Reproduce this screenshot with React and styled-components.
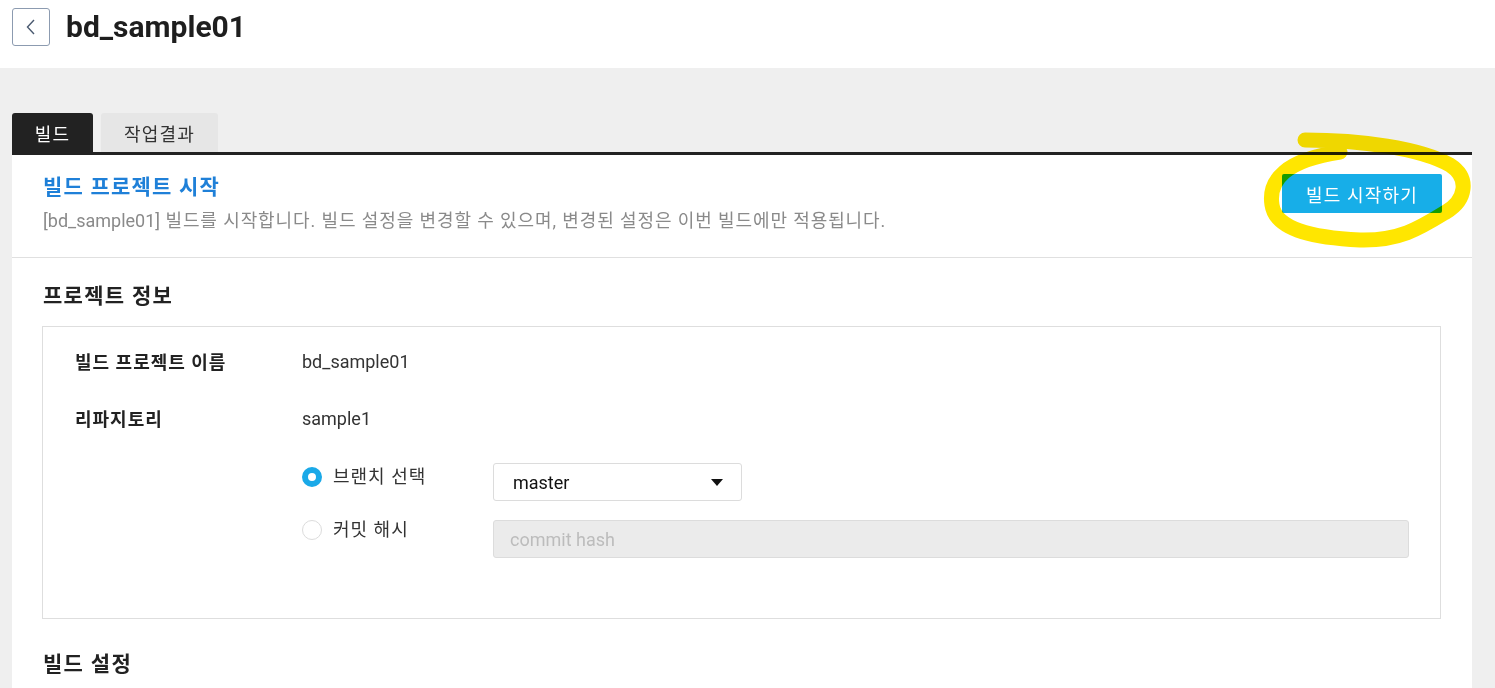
import React, { useState } from 'react';
import styled, { createGlobalStyle } from 'styled-components';

const GlobalStyle = createGlobalStyle`
  html, body {
    margin: 0;
    padding: 0;
    background: #efefef;
  }
  body {
    font-family: Roboto, "Noto Sans CJK KR", "Noto Sans", sans-serif;
    color: #222;
  }
  * {
    box-sizing: border-box;
  }
`;

function App() {
  const [mode, setMode] = useState('branch');
  const [tab, setTab] = useState('build');

  return (
    <Page>
      <GlobalStyle />
      <Header>
        <BackButton aria-label="back">
          <svg width="14" height="20" viewBox="0 0 14 20">
            <path d="M10 3 L3.5 10 L10 17" fill="none" stroke="#4a5a70" strokeWidth="1.4" />
          </svg>
        </BackButton>
        <PageTitle>bd_sample01</PageTitle>
      </Header>

      <Main>
        <Tabs>
          <Tab $active={tab === 'build'} $width={81} onClick={() => setTab('build')}>
            빌드
          </Tab>
          <Tab $active={tab === 'result'} $width={117} onClick={() => setTab('result')}>
            작업결과
          </Tab>
        </Tabs>

        <Panel>
          <PanelHead>
            <div>
              <PanelTitle>빌드 프로젝트 시작</PanelTitle>
              <PanelDesc>
                <Latin>[bd_sample01]</Latin> 빌드를 시작합니다. 빌드 설정을 변경할 수 있으며, 변경된 설정은 이번 빌드에만 적용됩니다.
              </PanelDesc>
            </div>
            <StartButton>빌드 시작하기</StartButton>
          </PanelHead>

          <Section>
            <SectionTitle>프로젝트 정보</SectionTitle>
            <InfoBox>
              <InfoRow>
                <Label>빌드 프로젝트 이름</Label>
                <Value>bd_sample01</Value>
              </InfoRow>
              <InfoRow>
                <Label>리파지토리</Label>
                <Value>sample1</Value>
              </InfoRow>
              <Options>
                <OptionRow>
                  <RadioLabel $offset={4} onClick={() => setMode('branch')}>
                    <Radio $checked={mode === 'branch'} />
                    브랜치 선택
                  </RadioLabel>
                  <Select>
                    <span>master</span>
                    <svg width="12" height="7" viewBox="0 0 12 7">
                      <path d="M0 0 H12 L6 7 Z" fill="#111" />
                    </svg>
                  </Select>
                </OptionRow>
                <OptionRow>
                  <RadioLabel $offset={0} onClick={() => setMode('commit')}>
                    <Radio $checked={mode === 'commit'} />
                    커밋 해시
                  </RadioLabel>
                  <HashInput placeholder="commit hash" disabled={mode !== 'commit'} />
                </OptionRow>
              </Options>
            </InfoBox>
          </Section>

          <Section>
            <SectionTitle>빌드 설정</SectionTitle>
          </Section>
        </Panel>
      </Main>

      <Highlight width="240" height="150" viewBox="1250 120 240 150">
        <path
          d="M1305 140 C1360 140 1420 148 1450 165 C1470 178 1466 200 1446 212 C1420 228 1400 241 1360 240 C1320 238 1276 232 1272 205 C1268 180 1286 160 1340 152"
          fill="none"
          stroke="#ffe600"
          strokeWidth="15"
          strokeLinecap="round"
        />
      </Highlight>
    </Page>
  );
}

const Page = styled.div`
  position: relative;
  min-height: 688px;
  background: #efefef;
`;

const Header = styled.header`
  display: flex;
  align-items: center;
  gap: 16px;
  height: 68px;
  padding: 0 12px 15px;
  background: #fff;
`;

const BackButton = styled.button`
  display: flex;
  align-items: center;
  justify-content: center;
  width: 38px;
  height: 38px;
  padding: 0;
  border: 1px solid #8c9bb0;
  border-radius: 3px;
  background: #fff;
  cursor: pointer;
`;

const PageTitle = styled.h1`
  margin: 0;
  font-size: 30px;
  font-weight: 700;
  color: #1e1e1e;
`;

const Main = styled.main`
  padding: 45px 23px 0 12px;
`;

const Tabs = styled.div`
  display: flex;
  gap: 8px;
`;

const Tab = styled.button`
  width: ${(p) => p.$width}px;
  height: 39px;
  padding: 0;
  border: none;
  border-radius: 3px 3px 0 0;
  background: ${(p) => (p.$active ? '#222' : '#e6e6e6')};
  color: ${(p) => (p.$active ? '#fff' : '#333')};
  font-family: inherit;
  font-size: 18px;
  letter-spacing: 1.2px;
  cursor: pointer;
`;

const Panel = styled.section`
  background: #fff;
  border-top: 3px solid #222;
  min-height: 540px;
`;

const PanelHead = styled.div`
  display: flex;
  justify-content: space-between;
  align-items: flex-start;
  padding: 19px 30px 23px 31px;
  border-bottom: 1px solid #e0e0e0;
`;

const PanelTitle = styled.h2`
  margin: 0;
  font-size: 21px;
  line-height: 26px;
  font-weight: 700;
  letter-spacing: 1.2px;
  color: #1f80d8;
`;

const PanelDesc = styled.p`
  margin: 8px 0 0;
  font-size: 18px;
  line-height: 26px;
  letter-spacing: 0.9px;
  color: #8a8a8a;
`;

const Latin = styled.span`
  letter-spacing: 0;
`;

const StartButton = styled.button`
  width: 160px;
  height: 39px;
  margin-top: 0;
  padding: 0;
  border: none;
  border-radius: 2px;
  background: #17aee8;
  color: #fff;
  font-family: inherit;
  font-size: 18px;
  letter-spacing: 1.2px;
  cursor: pointer;
`;

const Section = styled.div`
  padding: 26px 31px 0 30px;
  & + & {
    padding-top: 33px;
  }
`;

const SectionTitle = styled.h3`
  margin: 0 0 18px 1px;
  font-size: 21px;
  line-height: 24px;
  font-weight: 700;
  letter-spacing: 1.3px;
  color: #222;
`;

const InfoBox = styled.div`
  border: 1px solid #dedede;
  padding: 22px 31px 60px 32px;
`;

const InfoRow = styled.div`
  display: flex;
  align-items: center;
  height: 24px;
  margin-bottom: 33px;
`;

const Label = styled.div`
  width: 227px;
  font-size: 18px;
  font-weight: 700;
  letter-spacing: 1px;
  color: #222;
`;

const Value = styled.div`
  font-size: 18px;
  color: #333;
`;

const Options = styled.div`
  display: flex;
  flex-direction: column;
  gap: 19px;
  margin-left: 227px;
  margin-top: 1px;
`;

const OptionRow = styled.div`
  display: flex;
  align-items: flex-start;
`;

const RadioLabel = styled.label`
  display: flex;
  align-items: center;
  gap: 11px;
  width: 191px;
  padding-top: ${(p) => p.$offset}px;
  font-size: 18px;
  line-height: 20px;
  letter-spacing: 1px;
  color: #333;
  cursor: pointer;
`;

const Radio = styled.span`
  width: 20px;
  height: 20px;
  border-radius: 50%;
  flex-shrink: 0;
  background: #fff;
  border: ${(p) => (p.$checked ? '6px solid #1aa9e8' : '1px solid #dcdcdc')};
`;

const Select = styled.div`
  display: flex;
  align-items: center;
  justify-content: space-between;
  width: 249px;
  height: 38px;
  padding: 0 18px 0 19px;
  border: 1px solid #dcdcdc;
  border-radius: 3px;
  font-size: 18px;
  color: #111;
`;

const HashInput = styled.input`
  flex: 1;
  height: 38px;
  padding: 0 16px;
  border: 1px solid #dcdcdc;
  border-radius: 3px;
  background: #ebebeb;
  font-family: inherit;
  font-size: 18px;
  color: #333;
  outline: none;
  &::placeholder {
    color: #bcbcbc;
  }
`;

const Highlight = styled.svg`
  position: absolute;
  left: 1250px;
  top: 120px;
  mix-blend-mode: multiply;
  pointer-events: none;
`;

export default App;
